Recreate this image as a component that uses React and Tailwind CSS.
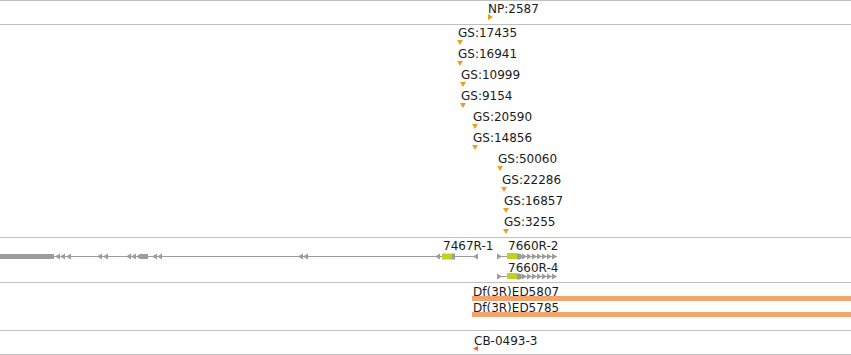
import React from "react";

const gs = [
  { label: "GS:17435", tx: 458, ax: 457 },
  { label: "GS:16941", tx: 458, ax: 457 },
  { label: "GS:10999", tx: 461, ax: 460 },
  { label: "GS:9154", tx: 461, ax: 460 },
  { label: "GS:20590", tx: 473, ax: 472 },
  { label: "GS:14856", tx: 473, ax: 472 },
  { label: "GS:50060", tx: 498, ax: 497 },
  { label: "GS:22286", tx: 502, ax: 501 },
  { label: "GS:16857", tx: 504, ax: 503 },
  { label: "GS:3255", tx: 504, ax: 503 },
];

const GRAY = "#9c9c9c";

function LeftArrow({ x, y }) {
  return <polygon points={`${x},${y} ${x + 5},${y - 3} ${x + 5},${y + 3}`} fill={GRAY} />;
}
function RightArrow({ x, y }) {
  return <polygon points={`${x + 5},${y} ${x},${y - 3} ${x},${y + 3}`} fill={GRAY} />;
}

function Transcript76({ y }) {
  const arrows = [522, 527, 532, 537, 542, 547, 552];
  return (
    <g>
      <line x1="497" y1={y} x2="557" y2={y} stroke={GRAY} strokeWidth="1" />
      <RightArrow x={497} y={y} />
      <rect x="507" y={y - 3.5} width="10" height="6" fill="#bfd21c" />
      <path d={`M517 ${y - 3} h2 a3 3 0 0 1 0 6 h-2 z`} fill={GRAY} />
      {arrows.map((a) => (
        <RightArrow key={a} x={a} y={y} />
      ))}
    </g>
  );
}

export default function App() {
  const txt = "absolute whitespace-nowrap text-[12px] leading-[14px] text-[#1a1a1a]";
  return (
    <div
      className="w-[851px] h-[355px] bg-white overflow-hidden border-t border-[#c0c0c0]"
      style={{ fontFamily: '"DejaVu Sans", sans-serif' }}
    >
      {/* Track 1 */}
      <div className="relative h-[24px] border-b border-[#c0c0c0]">
        <span className={`${txt} left-[488px] top-[1px]`}>NP:2587</span>
        <svg className="absolute left-[488px] top-[13px]" width="5" height="6" viewBox="0 0 5 6">
          <polygon points="0,0 5,3 0,6" fill="#e39c1c" />
        </svg>
      </div>

      {/* Track 2 */}
      <div className="relative h-[213px] border-b border-[#c0c0c0]">
        {gs.map((g, i) => (
          <React.Fragment key={g.label}>
            <span className={txt} style={{ left: g.tx, top: 1 + i * 21 }}>
              {g.label}
            </span>
            <svg
              className="absolute"
              style={{ left: g.ax, top: 15 + i * 21 }}
              width="6"
              height="5"
              viewBox="0 0 6 5"
            >
              <polygon points="0,0 6,0 3,5" fill="#e8a126" />
            </svg>
          </React.Fragment>
        ))}
      </div>

      {/* Track 3 - genes */}
      <div className="relative h-[45px] border-b border-[#c0c0c0]">
        <svg className="absolute left-0 top-0" width="851" height="44" viewBox="0 0 851 44">
          <line x1="54" y1="18.5" x2="478" y2="18.5" stroke={GRAY} strokeWidth="1" />
          <rect x="0" y="16" width="54" height="5" fill={GRAY} />
          {[55, 60, 66, 97, 103, 126, 131, 136, 152, 157, 298, 303, 435, 473].map((a) => (
            <LeftArrow key={a} x={a} y={18.5} />
          ))}
          <rect x="140" y="16" width="8" height="5" fill={GRAY} />
          <rect x="442" y="15.5" width="10" height="6" fill="#bfd21c" />
          <rect x="452" y="15.5" width="3" height="6" fill={GRAY} />
          <Transcript76 y={18.5} />
          <Transcript76 y={38.5} />
        </svg>
        <span className={`${txt} left-[443px] top-[1px]`}>7467R-1</span>
        <span className={`${txt} left-[508px] top-[1px]`}>7660R-2</span>
        <span className={`${txt} left-[508px] top-[23px]`}>7660R-4</span>
      </div>

      {/* Track 4 */}
      <div className="relative h-[48px] border-b border-[#c0c0c0]">
        <span className={`${txt} left-[473px] top-[2px]`}>Df(3R)ED5807</span>
        <div className="absolute left-[472px] right-0 top-[13px] h-[5px] bg-[#f4a56e]" />
        <span className={`${txt} left-[473px] top-[18px]`}>Df(3R)ED5785</span>
        <div className="absolute left-[472px] right-0 top-[29px] h-[5px] bg-[#f4a56e]" />
      </div>

      {/* Track 5 */}
      <div className="relative h-[24px] border-b border-[#c0c0c0]">
        <span className={`${txt} left-[474px] top-[3px]`}>CB-0493-3</span>
        <svg className="absolute left-[473px] top-[15px]" width="5" height="5" viewBox="0 0 5 5">
          <polygon points="0,2.5 5,0 5,5" fill="#f0603c" />
        </svg>
      </div>
    </div>
  );
}
